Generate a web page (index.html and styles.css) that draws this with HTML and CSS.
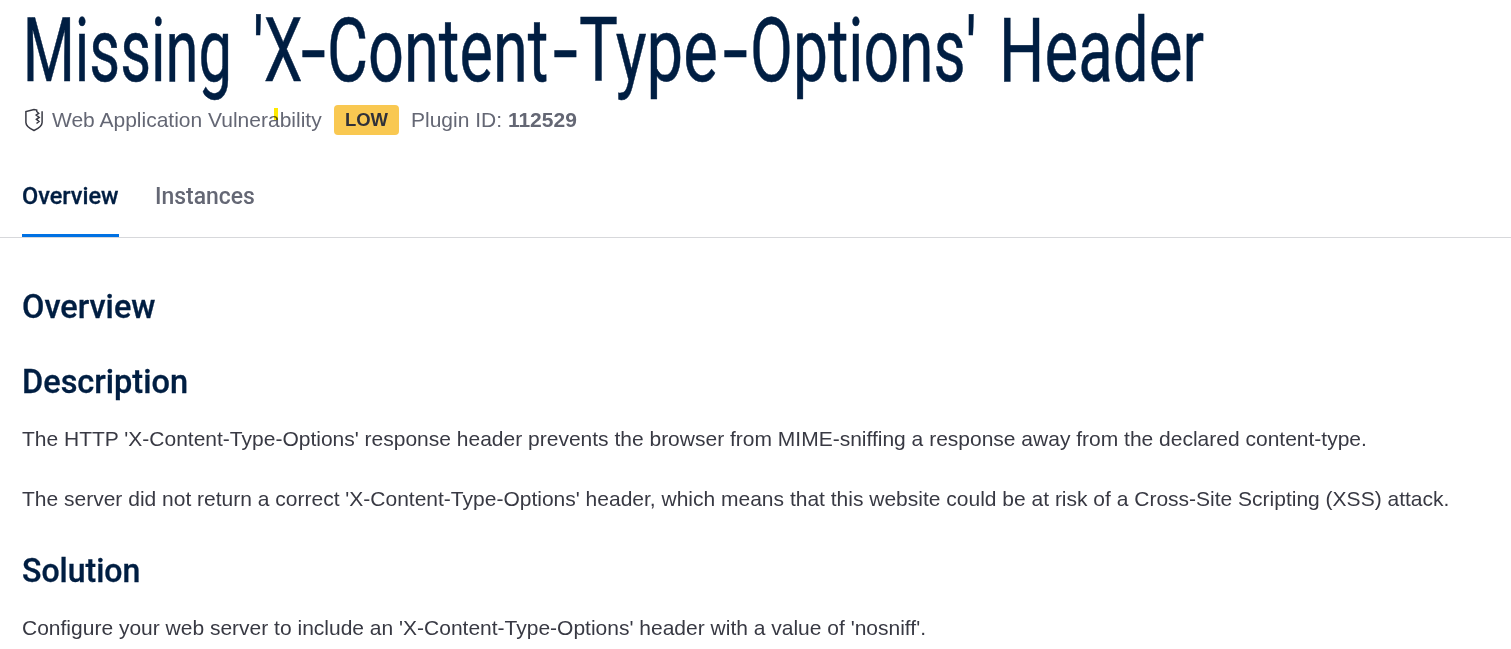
FILE: index.html
```html
<!DOCTYPE html>
<html lang="en">
<head>
<meta charset="utf-8">
<title>Missing 'X-Content-Type-Options' Header</title>
<link rel="stylesheet" href="styles.css">
</head>
<body>
<header class="page-header">
<h1 class="title"><span class="word missing">Missing</span> <span class="word quote-x">'X</span><span class="word dash">-</span><span class="word content-word">Content</span><span class="word dash">-</span><span class="word type">Type</span><span class="word dash dash-last">-</span><span class="word options">Options'</span> <span class="word header-word">Header</span></h1>
<div class="meta">
<svg class="shield" width="20" height="24" viewBox="0 0 20 24"><path d="M12.700 3.800V2L10 1.500 1.900 3.600v10.900c0 3.800 3.800 6 8.100 8 4.300-2 8.100-4.200 8.100-8V3.200M12.700 3.500l2 1.800-2.500 1.700 3 2.500-2.800 1.800 2.600 2.200-2.500 2" fill="none" stroke="#383943" stroke-width="1.500"/></svg>
<span class="category">Web Application Vulnerability<i class="mark"></i></span>
<span class="badge">LOW</span>
<span class="plugin">Plugin ID: <b>112529</b></span>
</div>
</header>
<nav class="tabs"><a class="tab active"><span>Overview</span></a><a class="tab"><span>Instances</span></a></nav>
<main class="content">
<h2 class="heading overview">Overview</h2>
<h2 class="heading description">Description</h2>
<p class="text">The HTTP 'X-Content-Type-Options' response header prevents the browser from MIME-sniffing a response away from the declared content-type.</p>
<p class="text">The server did not return a correct 'X-Content-Type-Options' header, which means that this website could be at risk of a Cross-Site Scripting (XSS) attack.</p>
<h2 class="heading solution">Solution</h2>
<p class="text">Configure your web server to include an 'X-Content-Type-Options' header with a value of 'nosniff'.</p>
</main>
</body>
</html>
```
FILE: styles.css
```css
* { box-sizing: border-box; }
body { margin: 0; height: 649px; overflow: hidden; background: #fff; font: 21px/30px "Liberation Sans", Arial, sans-serif; color: #383943; }
.page-header { height: 160px; padding-left: 22px; }
.title { display: flex; margin: 0; height: 105px; padding-top: 1px; font: 400 88.200px/100px Roboto, sans-serif; color: #001e42; white-space: nowrap; -webkit-text-stroke: .5px #001e42; }
.word { display: block; flex: none; transform-origin: 0 0; transform: scaleX(.7); }
.missing { width: 231px; padding-left: 1px; transform: scaleX(.677); }
.quote-x { width: 48px; }
.dash { width: 26px; transform: scaleX(1.020); }
.content-word { width: 226px; transform: scaleX(.715); }
.type { width: 144px; transform: scaleX(.740); }
.dash-last { width: 27px; }
.options { width: 249px; transform: scaleX(.707); }
.header-word { transform: scaleX(.722); }
.meta { display: flex; height: 30px; color: #646774; white-space: nowrap; }
.shield { flex: none; margin: 3px 0 0 2px; }
.category { position: relative; width: 282px; margin-left: 8px; }
.mark { position: absolute; left: 222px; top: 3px; width: 4px; height: 12px; background: #ffe900; mix-blend-mode: multiply; }
.badge { width: 65px; height: 30px; border-radius: 4px; background: #f9c851; color: #303139; font: bold 18.500px/30px "Liberation Sans", Arial, sans-serif; text-align: center; }
.plugin { margin-left: 12px; font-size: 21px; }
.tabs { display: flex; gap: 36px; height: 78px; padding-left: 22px; border-bottom: 1px solid #d7d8db; }
.tab { height: 77px; padding-top: 21px; font: 500 24px/30px Roboto, sans-serif; color: #646774; width: 100px; white-space: nowrap; }
.tab span { display: inline-block; transform-origin: 0 0; transform: scaleX(.955); }
.tab.active { width: 97px; color: #001e42; border-bottom: 3px solid #0071e3; }
.tab.active span { transform: scaleX(.98); -webkit-text-stroke: .3px #001e42; }
.content { padding: 49px 0 0 22px; }
.heading { margin: 0; width: max-content; font: 500 32.500px/40px Roboto, sans-serif; color: #001e42; transform-origin: 0 0; -webkit-text-stroke: .3px #001e42; }
.description { margin-top: 35px; margin-bottom: 22px; }
.text { margin: 0 0 30px; white-space: nowrap; }
.solution { margin-top: 37px; margin-bottom: 22px; transform: scaleX(.985); }
```
